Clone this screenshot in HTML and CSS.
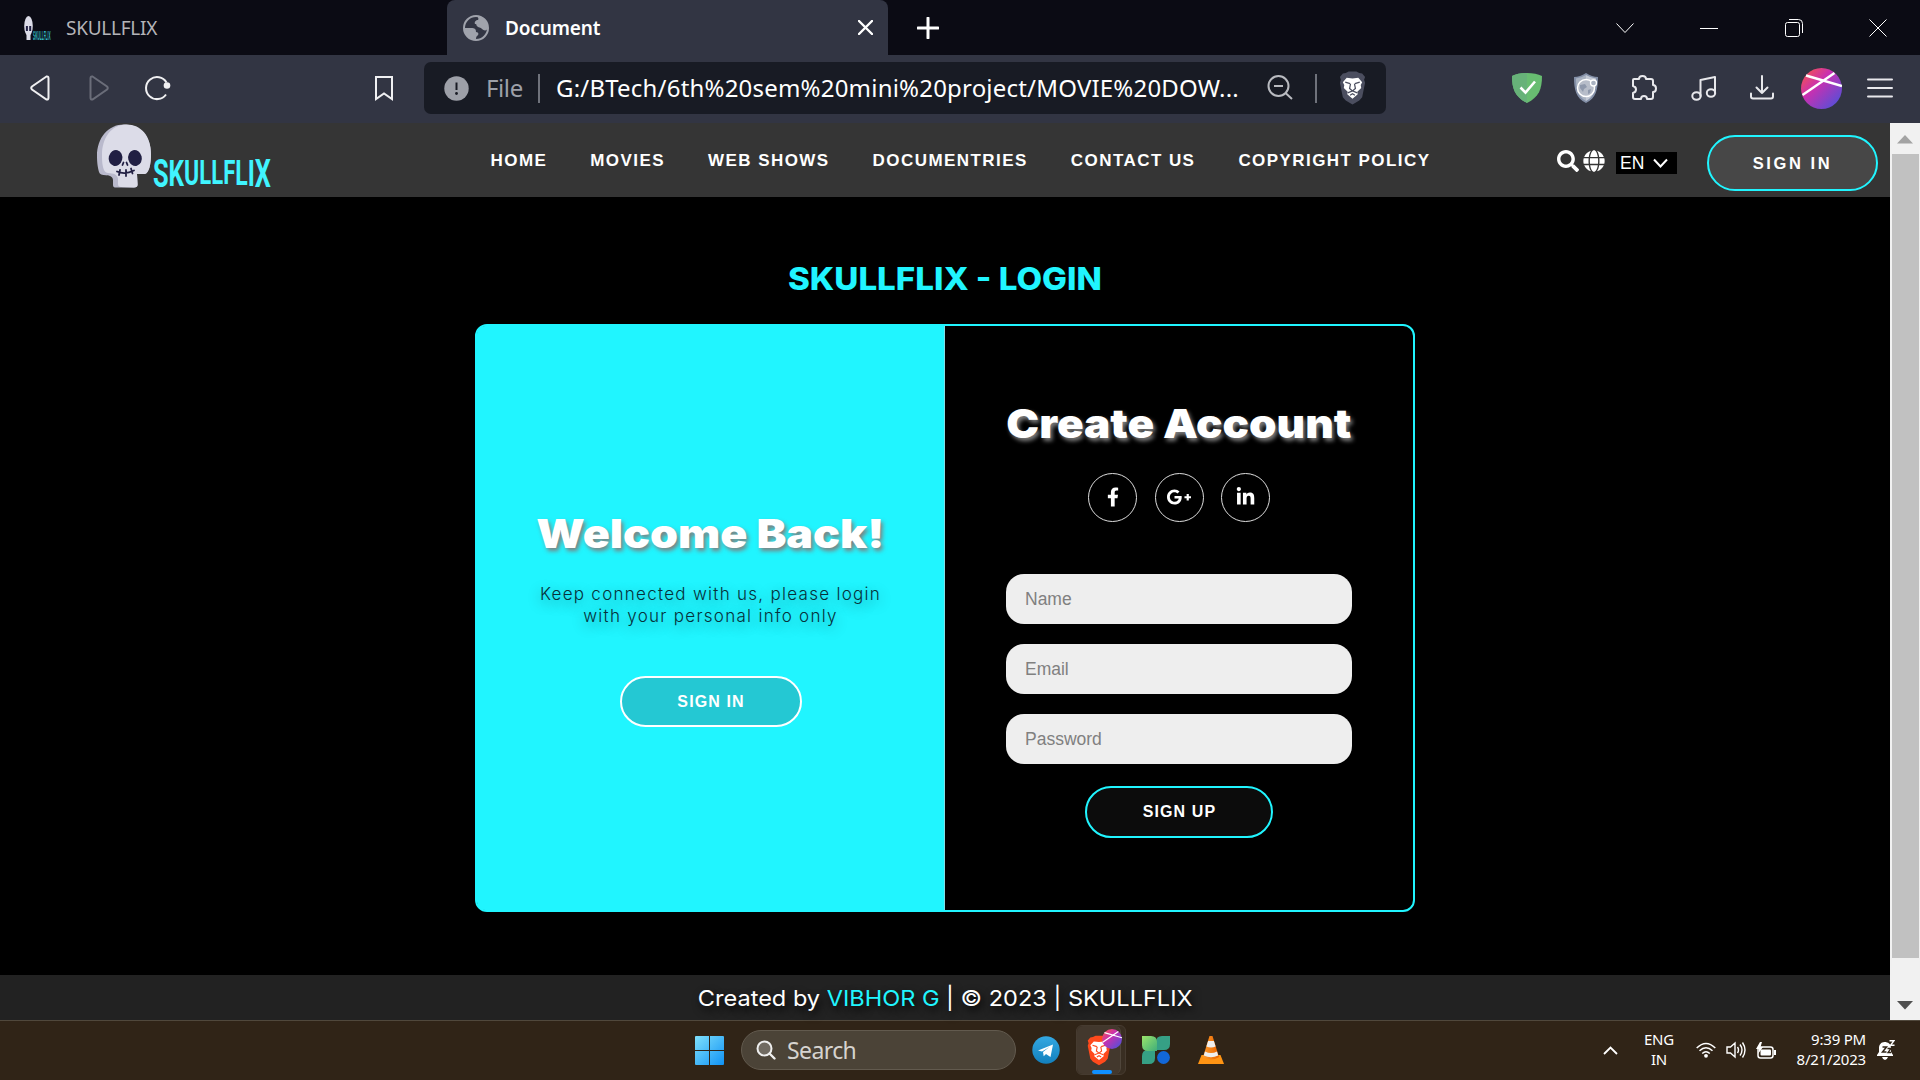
FILE: index.html
```html
<!DOCTYPE html>
<html lang="en">
<head>
<meta charset="utf-8">
<title>Document</title>
<link rel="stylesheet" href="styles.css">
</head>
<body>
<svg class="defs" width="0" height="0" aria-hidden="true">
  <defs>
    <linearGradient id="avatar" x1="0" y1="0" x2="1" y2="1"><stop offset="0" stop-color="#ff5a3c"/><stop offset=".4" stop-color="#c930b0"/><stop offset="1" stop-color="#3f55e0"/></linearGradient>
    <linearGradient id="win" x1="0" y1="0" x2="1" y2="1"><stop offset="0" stop-color="#7fe0fb"/><stop offset="1" stop-color="#1092f5"/></linearGradient>
    <linearGradient id="tg" x1="0" y1="0" x2="0" y2="1"><stop offset="0" stop-color="#33a8e2"/><stop offset="1" stop-color="#1380bd"/></linearGradient>
    <linearGradient id="leaf" x1="0" y1="0" x2="1" y2="1"><stop offset="0" stop-color="#9be36a"/><stop offset="1" stop-color="#3fae7a"/></linearGradient>
    <linearGradient id="cone" x1="0" y1="0" x2="1" y2="0"><stop offset="0" stop-color="#ff9a2a"/><stop offset="1" stop-color="#e86400"/></linearGradient>
    <symbol id="skull" viewBox="0 0 54 64">
      <path fill="#b9b9cc" d="M27 .5C11 .5 0 14 0 32c0 8 1 12 2 16 .6 2.500 3 3 7 3.200 4 .2 7 1.500 7 5V61c0 2 1 2.600 3 2.600h18c2.500 0 3.500-.8 3.600-3L40 50h8c4-1 6-10 6-20C54 12 43 .5 27 .5z"/>
      <path fill="#dcdce8" d="M29 .5C14 1 5 14 5 31c0 7 .5 11 2 15 1 2.500 3 3 6 3.200 5 .3 8 2.500 8 6V60c0 2 1 3 3 3l13 .6c2.500 0 3.500-.8 3.600-3L40 50h8c4-1 6-10 6-20C54 12 44 .2 29 .5z"/>
      <ellipse cx="18.500" cy="34" rx="6.800" ry="8" fill="#211f43" transform="rotate(14 18.500 34)"/>
      <ellipse cx="38" cy="34" rx="6.800" ry="8" fill="#211f43" transform="rotate(-14 38 34)"/>
      <path stroke="#211f43" stroke-width="1.800" stroke-linecap="round" fill="none" d="M25.500 41l1-2.500M30.500 41l-1-2.500M20 47.500q8 3.500 17-1M23 46l-1 5M29 46v6M34 44.500l1.500 5"/>
    </symbol>
    <symbol id="lion" viewBox="0 0 30 34">
      <path d="M8 1.500L11 0h8l3 1.500 3 .5 3 3.500-1 3 1 3-3 15L22 30l-7 4-7-4-3-3.500-3-15 1-3-1-3L5 2z"/>
      <path fill="#fff" d="M9 6.500l6 .6 6-.6 4 4.500-1.500 3 .5 3-4 4 .4 2.500L15 28l-5.400-4.500.4-2.500-4-4 .5-3L5 11z"/>
      <path fill="none" stroke="currentColor" stroke-width="1.300" d="M7.500 11l5 1.500M22.500 11l-5 1.500M13 12.500l-1 5 3 2.500 3-2.500-1-5M10 22l5-2 5 2M12.500 24.500l2.500-1.500 2.500 1.500"/>
    </symbol>
    <symbol id="orb" viewBox="0 0 41 41">
      <circle cx="20.500" cy="20.500" r="20.500" fill="url(#avatar)"/>
      <path stroke="#fff" stroke-width="2.400" d="M1.500 27L33.500 5M5 7.500l36 10.500" fill="none"/>
    </symbol>
  </defs>
</svg>

<div class="tabstrip">
  <div class="tab">
    <svg class="favicon" width="28" height="26" viewBox="0 0 28 26"><ellipse cx="4.500" cy="11" rx="4.300" ry="10" fill="#dcdce8"/><path d="M2.500 19h4v6h-4z" fill="#dcdce8"/><path d="M2.900 11v5M6.200 11v5" stroke="#211f43" stroke-width="2"/><text class="favicon-text" transform="translate(9 24.500) scale(.8 3)">SKULLFLIX</text></svg>
    <span class="tab-title">SKULLFLIX</span>
  </div>
  <div class="tab tab-active">
    <svg width="26" height="26" viewBox="0 0 26 26"><circle cx="13" cy="13" r="12" fill="none" stroke="#a0a3ac" stroke-width="2"/><path fill="#a0a3ac" d="M14 1c7 0 11 5 11 12-1 3-4 3-6 1-1-2-4-1-5-3-1-1 0-2-2-2-1-2 1-4 3-4 1-1 0-3-1-4zM1 13h7c4 0 5 1 5 4 3 0 3 3 1 4-1 1-1 2-1 4C5 25 1 19 1 13z"/></svg>
    <span class="tab-title">Document</span>
    <svg class="tab-close" width="15" height="15" viewBox="0 0 15 15"><path d="M1 1l13 13M14 1L1 14" stroke="#fff" stroke-width="2.400" stroke-linecap="round"/></svg>
  </div>
  <svg class="tab-new" width="22" height="22" viewBox="0 0 22 22"><path d="M11 1v20M1 11h20" stroke="#fff" stroke-width="3" stroke-linecap="round"/></svg>
  <div class="window-buttons">
    <svg width="18" height="18" viewBox="0 0 18 18"><path d="M.5 4.500l8.500 9 8.500-9"/></svg>
    <svg width="18" height="18" viewBox="0 0 18 18"><path d="M0 9.500h18"/></svg>
    <svg width="18" height="18" viewBox="0 0 18 18"><rect x=".5" y="3.500" width="14" height="14" rx="2"/><path d="M4 .5h9.500q4 0 4 4V14"/></svg>
    <svg width="18" height="18" viewBox="0 0 18 18"><path d="M.5.500l17 17M17.500.500l-17 17"/></svg>
  </div>
</div>

<div class="toolbar">
  <svg class="t-back" width="20" height="26" viewBox="0 0 20 26"><path d="M16.500 1.500L2 11.500q-1.500 1.500 0 3l14.500 10q2 .5 2-2v-19q0-2.500-2-2z"/></svg>
  <svg class="t-forward" width="20" height="26" viewBox="0 0 20 26"><path d="M3.500 1.500L18 11.500q1.500 1.500 0 3l-14.500 10q-2 .5-2-2v-19q0-2.500 2-2z"/></svg>
  <svg class="t-reload" width="26" height="26" viewBox="0 0 26 26"><path d="M21 19.500A11 11 0 1 1 21.500 7.500"/><circle cx="22" cy="10.500" r="3.300" fill="#f0f0f2" stroke="none"/></svg>
  <svg class="t-bookmark" width="18" height="26" viewBox="0 0 18 26"><path d="M1 2h16v22l-8-5.500L1 24z"/></svg>
  <div class="address">
    <svg width="25" height="25" viewBox="0 0 25 25"><circle cx="12.500" cy="12.500" r="12.200" fill="#9da0a8"/><path d="M12.500 6.500v7.500" stroke="#181b24" stroke-width="2"/><circle cx="12.500" cy="17.500" r="1.400" fill="#181b24"/></svg>
    <span class="scheme">File</span>
    <i class="divider"></i>
    <span class="url">G:/BTech/6th%20sem%20mini%20project/MOVIE%20DOW...</span>
    <svg class="zoom-icon" width="26" height="26" viewBox="0 0 26 26"><circle cx="11.500" cy="11" r="10"/><path d="M7 11h9M18.500 18l6.500 6"/></svg>
    <i class="divider divider-end"></i>
    <svg class="shields" width="29" height="34"><use href="#lion"/></svg>
  </div>
  <div class="extensions">
    <svg width="30" height="30" viewBox="0 0 30 30"><path fill="#68bd71" d="M15 0C9 0 4 1 0 3c0 13 3 21 15 27C27 24 30 16 30 3 26 1 21 0 15 0z"/><path fill="#67b279" d="M15 0C9 0 4 1 0 3c0 13 3 21 15 27z"/><path d="M8.500 14.500l5 5L23 8.500" fill="none" stroke="#fff" stroke-width="2.600"/></svg>
    <svg class="e-privacy" width="24" height="30" viewBox="0 0 24 30"><path fill="#8490a8" d="M12 0q6 4 12 4c0 13-2 21-12 26C2 25 0 17 0 4q6 0 12-4z"/><path fill="#c3c9d5" d="M12 2q5 3 10 3.500c0 11-2 18-10 22.500z"/><path fill="#aab3c2" d="M12 2Q7 5 2 5.500c0 11 2 18 10 22.500z"/><circle cx="12" cy="15" r="8.500" fill="#b7bdc9" stroke="#fff" stroke-width="1.500"/><path fill="#8f99ac" d="M6 12l5-1 2 3-3 2-1 3-3-4zM14 17l3-1-1 4-2 1z"/><circle cx="19.500" cy="10" r="3" fill="#aab3c2" stroke="#fff" stroke-width="1.300"/></svg>
    <svg class="e-line e-puzzle" width="26" height="26" viewBox="0 0 26 26"><path d="M3 4h5c0-4 7-4 7 0h5q2 0 2 2v4c4 0 4 7 0 7v5q0 2-2 2h-4c0-4-6-4-6 0H4q-2 0-2-2v-4c4-1 4-6 0-7V5q0-1 1-1z"/></svg>
    <svg class="e-line e-music" width="26" height="26" viewBox="0 0 26 26"><path d="M9.500 21V5L24 2v16"/><ellipse cx="5.500" cy="21" rx="4.200" ry="3.800"/><ellipse cx="20" cy="18" rx="4.200" ry="3.800"/></svg>
    <svg class="e-line e-download" width="24" height="26" viewBox="0 0 24 26"><path d="M12 1v17M6.500 12.500L12 18l5.500-5.500M1 18.500v3q0 2 2 2h18q2 0 2-2v-3"/></svg>
    <svg class="e-avatar" width="41" height="41"><use href="#orb"/></svg>
    <svg class="e-line e-menu" width="26" height="22" viewBox="0 0 26 22"><path d="M1 2.500h24M1 11h24M1 19.500h24"/></svg>
  </div>
</div>

<div class="viewport">
  <main class="page">
    <header class="nav">
      <svg class="logo" width="180" height="74" viewBox="0 0 180 74"><use href="#skull" x="0" y="5" width="54" height="64"/><text class="logo-text" textLength="174" lengthAdjust="spacingAndGlyphs" transform="translate(56 68) scale(.678 1)"><tspan class="l5">S</tspan><tspan class="l4" dy="-1">K</tspan><tspan class="l3" dy="-1.500">U</tspan><tspan class="l2" dy="-1">LLF</tspan><tspan class="l3" dy="1">L</tspan><tspan class="l4" dy="1.500">I</tspan><tspan class="l5" dy="1">X</tspan></text></svg>
      <nav class="links">
        <a>HOME</a><a>MOVIES</a><a>WEB SHOWS</a><a>DOCUMENTRIES</a><a>CONTACT US</a><a>COPYRIGHT POLICY</a>
      </nav>
      <svg class="n-search" width="22" height="22" viewBox="0 0 512 512"><path fill="#fff" d="M505 442.700L405.300 343c-4.500-4.500-10.600-7-17-7H372c27.600-35.300 44-79.700 44-128C416 93.100 322.900 0 208 0S0 93.100 0 208s93.100 208 208 208c48.300 0 92.700-16.400 128-44v16.300c0 6.400 2.500 12.500 7 17l99.700 99.700c9.400 9.400 24.600 9.400 33.900 0l28.300-28.300c9.400-9.400 9.400-24.600.1-34zM208 336c-70.700 0-128-57.200-128-128 0-70.700 57.200-128 128-128 70.700 0 128 57.200 128 128 0 70.700-57.200 128-128 128z"/></svg>
      <svg class="n-globe" width="22" height="22" viewBox="0 0 496 512"><path fill="#fff" d="M336.500 160C322 70.700 287.800 8 248 8s-74 62.700-88.500 152h177zM152 256c0 22.200 1.200 43.500 3.300 64h185.300c2.100-20.500 3.300-41.800 3.300-64s-1.200-43.500-3.300-64H155.300c-2.100 20.500-3.300 41.800-3.300 64zm324.700-96c-28.600-67.900-86.500-120.400-158-141.600 24.400 33.800 41.200 84.700 50 141.600h108zM177.200 18.400C105.800 39.600 47.800 92.100 19.300 160h108c8.700-56.900 25.500-107.800 49.900-141.600zM487.400 192H372.700c2.100 21 3.300 42.500 3.300 64s-1.200 43-3.300 64h114.600c5.500-20.500 8.600-41.800 8.600-64s-3.100-43.500-8.500-64zM120 256c0-21.500 1.200-43 3.300-64H8.600C3.200 212.500 0 233.800 0 256s3.200 43.500 8.600 64h114.600c-2-21-3.200-42.500-3.200-64zm39.500 96c14.500 89.300 48.700 152 88.500 152s74-62.700 88.500-152h-177zm159.300 141.600c71.400-21.200 129.400-73.700 158-141.600h-108c-8.800 56.900-25.600 107.800-50 141.600zM19.300 352c28.600 67.900 86.500 120.400 158 141.600-24.400-33.800-41.200-84.700-50-141.600h-108z"/></svg>
      <div class="lang"><span>EN</span><svg width="15" height="10" viewBox="0 0 15 10"><path d="M1 1.500l6.500 7 6.500-7" fill="none" stroke="#fff" stroke-width="2"/></svg></div>
      <button class="btn btn-nav">SIGN IN</button>
    </header>

    <section class="login">
      <h1 class="title">SKULLFLIX - LOGIN</h1>
      <div class="card">
        <div class="pane pane-welcome">
          <h2 class="heading">Welcome Back!</h2>
          <p class="note">Keep connected with us, please login<br>with your personal info only</p>
          <button class="btn btn-in">SIGN IN</button>
        </div>
        <div class="pane pane-create">
          <h2 class="heading">Create Account</h2>
          <div class="socials">
            <a class="social"><svg width="12" height="20" viewBox="0 0 320 512"><path d="M279.140 288l14.220-92.660h-88.910v-60.130c0-25.350 12.420-50.060 52.240-50.060h40.420V6.260S260.430 0 225.360 0c-73.220 0-121.080 44.380-121.080 124.720v70.620H22.890V288h81.390v224h100.170V288z"/></svg></a>
            <a class="social"><svg width="26" height="20" viewBox="0 0 640 512"><path d="M386.061 228.496c1.834 9.692 3.143 19.384 3.143 31.956C389.204 370.205 315.599 448 204.800 448c-106.084 0-192-85.915-192-192s85.916-192 192-192c51.864 0 95.083 18.859 128.611 50.292l-52.126 50.030c-14.145-13.621-39.028-29.599-76.485-29.599-65.484 0-118.920 54.221-118.920 121.277 0 67.056 53.436 121.277 118.920 121.277 75.961 0 104.513-54.745 108.965-82.773H204.800v-66.009h181.261zm185.406 6.437V179.200h-56.001v55.733h-55.733v56.001h55.733v55.733h56.001v-55.733H627.200v-56.001h-55.733z"/></svg></a>
            <a class="social"><svg width="19" height="20" viewBox="0 0 448 512"><path d="M100.280 448H7.400V148.900h92.880zM53.790 108.100C24.090 108.100 0 83.500 0 53.800a53.790 53.790 0 0 1 107.580 0c0 29.700-24.100 54.300-53.790 54.300zM447.900 448h-92.680V302.400c0-34.700-.7-79.200-48.290-79.200-48.290 0-55.690 37.700-55.690 76.700V448h-92.780V148.900h89.080v40.800h1.300c12.400-23.500 42.690-48.300 87.880-48.300 94 0 111.280 61.900 111.280 142.300V448z"/></svg></a>
          </div>
          <input class="field" type="text" placeholder="Name">
          <input class="field" type="email" placeholder="Email">
          <input class="field" type="password" placeholder="Password">
          <button class="btn btn-up">SIGN UP</button>
        </div>
      </div>
    </section>

    <footer class="footer"><p>Created by <b>VIBHOR G</b> | © 2023 | SKULLFLIX</p></footer>
  </main>
  <div class="scrollbar">
    <svg width="16" height="9" viewBox="0 0 16 9"><path d="M8 0l8 8.500H0z" fill="#a3a3a3"/></svg>
    <i class="thumb"></i>
    <svg width="16" height="9" viewBox="0 0 16 9"><path d="M0 0h16L8 8.500z" fill="#505050"/></svg>
  </div>
</div>

<div class="taskbar">
  <svg class="k-start" width="29" height="29" viewBox="0 0 29 29"><path fill="url(#win)" d="M1 0h13v14H0V1q0-1 1-1zM15 0h13q1 0 1 1v13H15zM0 15h14v14H1q-1 0-1-1zM15 15h14v13q0 1-1 1H15z"/></svg>
  <div class="search">
    <svg width="20" height="20" viewBox="0 0 20 20"><circle cx="8.500" cy="8.500" r="7" fill="#706a61" stroke="#eee" stroke-width="2"/><path d="M13.500 13.500l5 5" stroke="#eee" stroke-width="2.400" stroke-linecap="round"/></svg>
    <span>Search</span>
  </div>
  <svg class="k-telegram" width="28" height="28" viewBox="0 0 28 28"><circle cx="14" cy="14" r="13.700" fill="url(#tg)"/><path fill="#fff" d="M6 14.500l15-6-2.500 12.500-4.500-3-2.300 2.300-.7-4.300 6.500-5-7.500 4.500z"/></svg>
  <div class="k-brave">
    <div class="tile">
      <svg class="lion" width="26" height="31"><use href="#lion"/></svg>
      <i class="running"></i>
    </div>
    <svg class="badge" width="20" height="20" viewBox="0 0 41 41"><use href="#orb"/></svg>
  </div>
  <svg class="k-leaf" width="28" height="28" viewBox="0 0 28 28"><path fill="#36a085" d="M28 0h-8q-6 0-6 6v8h8q6 0 6-6zM0 28h7q6 0 6-6v-8H6q-6 0-6 6z"/><path fill="url(#leaf)" d="M0 0h9q6 0 6 6v9H6q-6 0-6-6z"/><circle cx="21.500" cy="21.500" r="6.400" fill="#1267d8"/></svg>
  <svg class="k-vlc" width="26" height="28" viewBox="0 0 26 28"><path fill="#ff9413" d="M3.500 19h19L26 28H0z"/><path fill="url(#cone)" d="M11.500 0h3L21 21q-8 5-16 0z"/><path fill="#eee" d="M10.100 5h5.800l1.700 5.500q-4.500 2-9.200 0zM7 15.500q6 3 12 0l1.200 4q-7.200 3.500-14.400 0z"/></svg>
  <div class="tray">
    <svg width="15" height="9" viewBox="0 0 15 9"><path d="M1 8l6.500-6.500L14 8" fill="none" stroke="#fff" stroke-width="1.800"/></svg>
    <div class="tray-text tray-lang"><span>ENG</span><span>IN</span></div>
    <svg class="y-wifi" width="20" height="16" viewBox="0 0 20 16"><g fill="none" stroke="#fff" stroke-width="1.500"><path d="M.7 6Q10-3 19.300 6M3.500 8.800q6.500-6 13 0M6.200 11.500q3.800-3.500 7.600 0"/></g><circle cx="10" cy="13.800" r="1.900" fill="#fff"/></svg>
    <svg class="y-sound" width="20" height="18" viewBox="0 0 20 18"><g fill="none" stroke="#fff" stroke-width="1.400"><path d="M1 6h3.500L9 2v14l-4.500-4H1zM11.500 6q2 3 0 6M14 3.500q4 5.500 0 11M16.500 1.500q5 7.500 0 15"/></g></svg>
    <svg class="y-battery" width="20" height="17" viewBox="0 0 20 17"><rect x="2" y="5" width="15" height="11" rx="2.500" fill="none" stroke="#fff" stroke-width="1.500"/><rect x="4.500" y="7.500" width="10.500" height="6" rx="1" fill="#fff"/><path fill="#fff" d="M18 8h2v5h-2zM4 0L0 7h3l-1 5 5-7H4.500L6 0z"/></svg>
    <div class="tray-text tray-clock"><span>9:39 PM</span><span>8/21/2023</span></div>
    <svg class="y-bell" width="18" height="20" viewBox="0 0 18 20"><path fill="#fff" d="M7.500 2C4 2 2 5 2 8v4l-2 3v1h16v-1l-2-3V8C14 4 11 2 7.500 2zM5 17h6q-1 3-3 3t-3-3z"/><path fill="none" stroke="#302417" stroke-width="1.500" d="M5.500 7h4l-4 5h4"/><path fill="none" stroke="#302417" stroke-width="1.300" d="M10.500 8.500h3.500l-3 4h3"/><path fill="none" stroke="#fff" stroke-width="1.400" d="M12.500.700h4.500l-3.500 4.500h4"/></svg>
  </div>
</div>
</body>
</html>
```
FILE: styles.css
```css
* { box-sizing: border-box; }
body { margin: 0; width: 1920px; height: 1080px; overflow: hidden; display: flex; flex-direction: column; background: #000; color: #fff; font-family: "Noto Sans", sans-serif; }
svg { display: block; flex: none; }
.defs { position: absolute; }
h1, h2, p { margin: 0; }
button, input { font-family: "Liberation Sans", sans-serif; }

/* Browser tabs */
.tabstrip { flex: none; height: 55px; display: flex; align-items: center; background: #0b0b14; }
.tab { width: 447px; height: 55px; padding-left: 24px; display: flex; align-items: center; color: #b4b4b8; font-size: 19px; letter-spacing: -.25px; }
.tab-title { margin-left: 14px; white-space: nowrap; }
.favicon { overflow: visible; }
.favicon-text { font: bold 4px "Liberation Sans", sans-serif; letter-spacing: 0; fill: #35b9c2; }
.tab-active { width: 441px; padding: 0 15px 0 16px; background: #323543; border-radius: 8px 8px 0 0; color: #fff; font-weight: 600; letter-spacing: -.15px; }
.tab-active .tab-title { margin-left: 16px; }
.tab-close { margin-left: auto; }
.tab-new { margin-left: 29px; }
.window-buttons { margin-left: auto; margin-right: 33px; display: flex; gap: 66.300px; }
.window-buttons path, .window-buttons rect { fill: none; stroke: #fff; stroke-width: 1; }

/* Browser toolbar */
.toolbar { flex: none; height: 68px; padding-bottom: 2px; display: flex; align-items: center; background: #323543; }
.t-back, .t-forward, .t-reload, .t-bookmark { fill: none; stroke: #f0f0f2; stroke-width: 2; }
.t-back { margin-left: 30px; }
.t-forward { margin-left: 39px; stroke: #6a6d79; }
.t-reload { margin-left: 36px; }
.t-bookmark { margin-left: 204px; }
.address { margin-left: 31px; width: 962px; height: 52px; padding-left: 20px; display: flex; align-items: center; background: #181b24; border-radius: 7px; font-size: 24px; }
.scheme { width: 51px; margin: -2px 0 0 17px; color: #9da0a8; letter-spacing: -.4px; }
.divider { width: 2px; height: 29px; margin-left: 1px; background: #6f727b; }
.url { width: 694px; margin: -2px 0 0 16px; white-space: nowrap; letter-spacing: .2px; }
.zoom-icon { margin-left: 17px; fill: none; stroke: #b9bbc0; stroke-width: 2; }
.divider-end { margin-left: 22px; }
.shields { margin-left: 21px; fill: #4b4e5f; color: #4b4e5f; }
.extensions { margin-left: auto; margin-right: 27px; display: flex; align-items: center; }
.e-line { fill: none; stroke: #e8e8ec; stroke-width: 2; stroke-linecap: round; stroke-linejoin: round; }
.e-privacy { margin-left: 32px; }
.e-puzzle { margin-left: 33px; }
.e-music { margin-left: 34px; }
.e-download { margin-left: 33px; }
.e-avatar { margin-left: 27px; }
.e-menu { margin-left: 25px; }

/* Page */
.viewport { flex: none; height: 897px; display: flex; }
.page { width: 1890px; display: flex; flex-direction: column; }
.nav { height: 74px; display: flex; align-items: center; background: #353535; font-family: "Liberation Sans", sans-serif; }
.logo { margin: -8px 0 0 97px; overflow: visible; }
.logo-text { font-family: "Roboto", sans-serif; font-weight: 700; fill: #40f4ff; }
.l5 { font-size: 38px; }
.l4 { font-size: 36.500px; }
.l3 { font-size: 34.500px; }
.l2 { font-size: 33px; }
.links { margin: 2px 0 0 213.500px; width: 1066.500px; display: flex; gap: 43px; font-size: 17px; font-weight: 700; letter-spacing: 1.440px; white-space: nowrap; }
.n-search, .n-globe { margin-top: 2px; }
.n-globe { margin-left: 4px; }
.lang { margin: 6px 0 0 11px; width: 61px; height: 22px; padding: 0 9px 0 4px; display: flex; align-items: center; justify-content: space-between; background: #000; font-size: 17.500px; line-height: 22px; }
.btn { border: 2px solid #20f5ff; border-radius: 26px; color: #fff; font-size: 16px; font-weight: 700; letter-spacing: 1.1px; padding: 0 0 0 1px; }
.btn-nav { width: 171px; height: 56px; margin: 6px 0 0 30px; padding: 0; border-radius: 28px; background: #474747; font-size: 16.5px; letter-spacing: 2.6px; }

.login { flex: 1; display: flex; flex-direction: column; align-items: center; font-family: "Inter", sans-serif; }
.title { margin-top: 60px; height: 44px; line-height: 44px; font-size: 31px; font-weight: 800; color: #20f5ff; white-space: nowrap; transform: scaleX(1.068); }
.card { margin-top: 23px; width: 940px; height: 588px; display: flex; border: 2px solid #20f5ff; border-radius: 12px; }
.pane { width: 468px; display: flex; flex-direction: column; align-items: center; }
.pane-welcome { background: #20f5ff; border-right: 1px solid #7fdfe6; border-radius: 8px 0 0 8px; }
.heading { height: 50px; line-height: 50px; font-size: 40px; font-weight: 900; white-space: nowrap; text-shadow: 2px 3px 4px #7f7f7f; }
.pane-welcome .heading { margin-top: 183px; transform: scaleX(1.12); }
.pane-create .heading { margin-top: 73px; transform: scaleX(1.1); }
.note { margin-top: 24px; height: 44px; line-height: 22px; font-size: 17px; font-weight: 300; letter-spacing: 1.28px; color: #06313a; text-align: center; white-space: nowrap; text-shadow: 0 4px 14px rgba(0, 0, 0, .45); }
.btn-in { width: 182px; height: 51px; margin-top: 49px; border-color: #fff; background: #24c8d3; }
.socials { margin-top: 24px; height: 49px; display: flex; gap: 17.500px; }
.social { width: 49px; height: 49px; display: flex; align-items: center; justify-content: center; border: 1px solid #ddd; border-radius: 50%; }
.social svg { fill: #fff; margin-top: -2px; }
.field { width: 346px; height: 50px; margin: 0 0 20px; padding: 0 19px; border: 0; border-radius: 18px; background: #eee; font-size: 17.500px; }
.socials + .field { margin-top: 52px; }
.field::placeholder { color: #808080; }
.btn-up { width: 188px; height: 52px; margin-top: 2px; background: #0c0c0c; }
.footer { height: 45px; background: #222; display: flex; justify-content: center; font: 400 22px/46px "Inter", sans-serif; white-space: nowrap; text-shadow: 2px 4px 8px #000; }
.footer p { transform: scaleX(1.07); }
.footer b { font-weight: 400; color: #20f5ff; }
.scrollbar { width: 30px; padding: 12px 0 9px; background: #f1f1f1; display: flex; flex-direction: column; align-items: center; }
.thumb { width: 27px; height: 804px; margin: 10px 0 43px; background: #c1c1c1; }

/* Taskbar */
.taskbar { flex: none; height: 60px; padding-bottom: 1px; border-top: 1px solid #50483c; background: #302417; display: flex; align-items: center; }
.k-start { margin-left: 695px; }
.search { margin-left: 17px; width: 275px; height: 40px; padding-left: 14px; display: flex; align-items: center; gap: 11px; border: 1px solid #625a4e; border-radius: 20px; background: #4b4337; color: #d6d3cf; font-size: 23px; letter-spacing: -.6px; }
.k-telegram { margin-left: 16px; }
.k-brave { position: relative; margin-left: 16px; width: 50px; height: 50px; border: 1px solid #463b30; border-radius: 6px; background: #392e22; }
.tile { width: 44px; height: 48px; padding-top: 9px; border-right: 1px solid #50463b; border-radius: 6px; background: #43382d; display: flex; flex-direction: column; align-items: center; gap: 4px; }
.lion { fill: #ff4a1c; color: #ff4a1c; }
.badge { position: absolute; left: 25px; top: 3px; }
.running { width: 20px; height: 4px; margin-left: 6px; border-radius: 2px; background: #1090ff; }
.k-leaf { margin-left: 16px; }
.k-vlc { margin-left: 28px; }
.tray { margin-left: auto; margin-right: 25px; display: flex; align-items: center; }
.tray-text { display: flex; flex-direction: column; font-size: 15px; line-height: 20px; letter-spacing: -.2px; white-space: nowrap; }
.tray-lang { width: 30px; margin: -2px 0 0 26px; align-items: center; }
.y-wifi { margin-left: 22px; }
.y-sound { margin-left: 10px; }
.y-battery { margin-left: 10px; }
.tray-clock { width: 70px; margin: -2px 0 0 20px; align-items: flex-end; }
.y-bell { margin-left: 11px; }
```
